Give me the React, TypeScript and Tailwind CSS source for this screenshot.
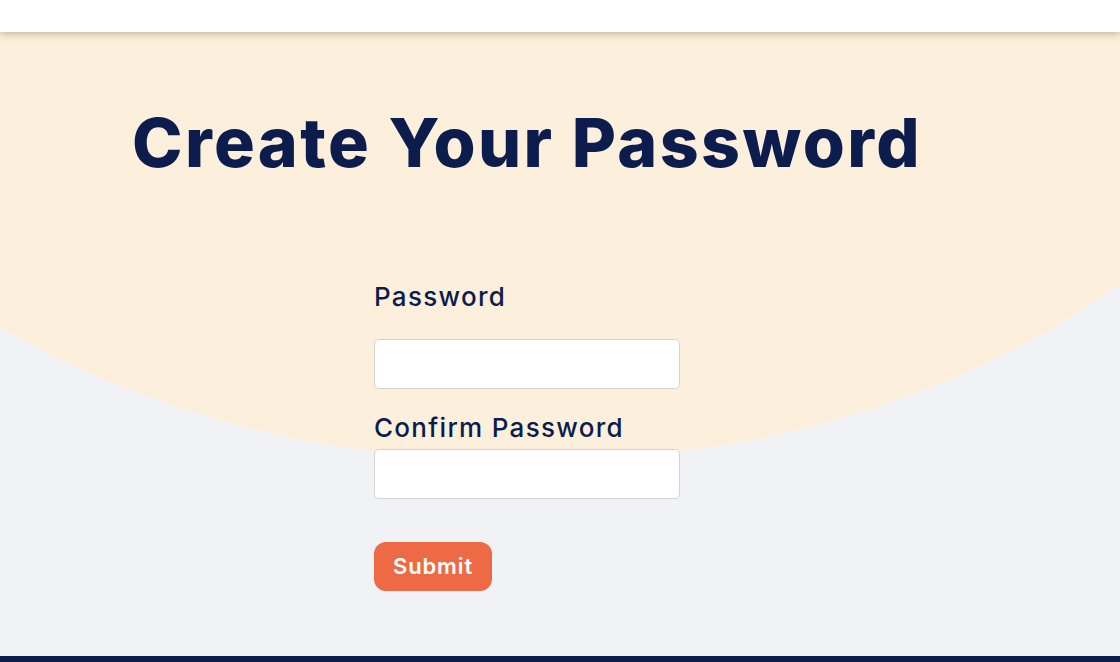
import React from "react";

export default function App() {
  return (
    <div className="relative flex h-[662px] w-full flex-col overflow-hidden bg-[#f1f2f6]" style={{ fontFamily: "Inter, 'Noto Sans', sans-serif" }}>
      <header className="relative z-20 h-8 w-full bg-white shadow-[0_2px_8px_rgba(90,70,40,0.35)]" />
      <main className="relative flex-1">
        <div className="pointer-events-none absolute left-[-273px] top-[-658px] h-[1088px] w-[1600px] rounded-[50%] bg-[#fcf0dc]" />
        <div className="relative z-10 flex flex-col">
          <h1 className="pl-[132px] pt-[76px] text-[68px] font-extrabold leading-none tracking-[0.035em] text-[#0b1c4d]">
            Create Your Password
          </h1>
          <form className="ml-[374px] mt-[108px] flex w-[306px] flex-col" onSubmit={(e) => e.preventDefault()}>
            <label className="text-[26px] font-medium leading-none tracking-[0.05em] text-[#0b1c4d]">Password</label>
            <input type="password" className="mt-[29px] h-[50px] w-[306px] rounded-[5px] border border-[#d3d3d3] bg-white px-3" />
            <label className="mt-[26px] text-[26px] font-medium leading-none tracking-[0.05em] text-[#0b1c4d]">Confirm Password</label>
            <input type="password" className="mt-[8px] h-[50px] w-[306px] rounded-[5px] border border-[#d3d3d3] bg-white px-3" />
            <div className="mt-[43px]">
              <button type="submit" className="h-[49px] w-[118px] rounded-[12px] bg-[#ee6a45] text-[22px] font-semibold tracking-[0.04em] text-white">
                Submit
              </button>
            </div>
          </form>
        </div>
      </main>
      <footer className="relative z-20 h-[6px] w-full bg-[#0b1c4d]" />
    </div>
  );
}
